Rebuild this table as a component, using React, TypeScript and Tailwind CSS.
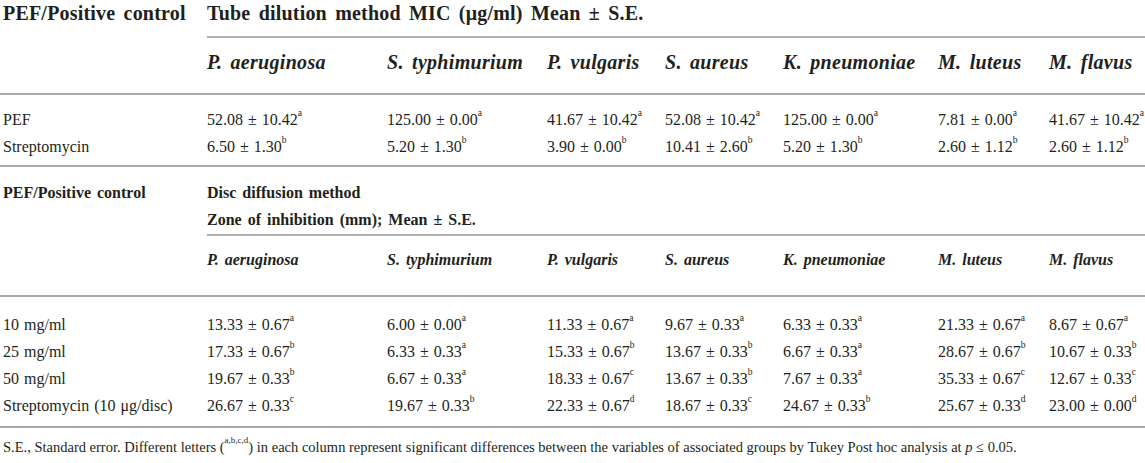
const species = [
  'P. aeruginosa',
  'S. typhimurium',
  'P. vulgaris',
  'S. aureus',
  'K. pneumoniae',
  'M. luteus',
  'M. flavus',
];

type Cell = [string, string];

const micRows: { label: string; values: Cell[] }[] = [
  {
    label: 'PEF',
    values: [
      ['52.08 ± 10.42', 'a'],
      ['125.00 ± 0.00', 'a'],
      ['41.67 ± 10.42', 'a'],
      ['52.08 ± 10.42', 'a'],
      ['125.00 ± 0.00', 'a'],
      ['7.81 ± 0.00', 'a'],
      ['41.67 ± 10.42', 'a'],
    ],
  },
  {
    label: 'Streptomycin',
    values: [
      ['6.50 ± 1.30', 'b'],
      ['5.20 ± 1.30', 'b'],
      ['3.90 ± 0.00', 'b'],
      ['10.41 ± 2.60', 'b'],
      ['5.20 ± 1.30', 'b'],
      ['2.60 ± 1.12', 'b'],
      ['2.60 ± 1.12', 'b'],
    ],
  },
];

const discRows: { label: string; values: Cell[] }[] = [
  {
    label: '10 mg/ml',
    values: [
      ['13.33 ± 0.67', 'a'],
      ['6.00 ± 0.00', 'a'],
      ['11.33 ± 0.67', 'a'],
      ['9.67 ± 0.33', 'a'],
      ['6.33 ± 0.33', 'a'],
      ['21.33 ± 0.67', 'a'],
      ['8.67 ± 0.67', 'a'],
    ],
  },
  {
    label: '25 mg/ml',
    values: [
      ['17.33 ± 0.67', 'b'],
      ['6.33 ± 0.33', 'a'],
      ['15.33 ± 0.67', 'b'],
      ['13.67 ± 0.33', 'b'],
      ['6.67 ± 0.33', 'a'],
      ['28.67 ± 0.67', 'b'],
      ['10.67 ± 0.33', 'b'],
    ],
  },
  {
    label: '50 mg/ml',
    values: [
      ['19.67 ± 0.33', 'b'],
      ['6.67 ± 0.33', 'a'],
      ['18.33 ± 0.67', 'c'],
      ['13.67 ± 0.33', 'b'],
      ['7.67 ± 0.33', 'a'],
      ['35.33 ± 0.67', 'c'],
      ['12.67 ± 0.33', 'c'],
    ],
  },
  {
    label: 'Streptomycin (10 μg/disc)',
    values: [
      ['26.67 ± 0.33', 'c'],
      ['19.67 ± 0.33', 'b'],
      ['22.33 ± 0.67', 'd'],
      ['18.67 ± 0.33', 'c'],
      ['24.67 ± 0.33', 'b'],
      ['25.67 ± 0.33', 'd'],
      ['23.00 ± 0.00', 'd'],
    ],
  },
];

function Value({ cell }: { cell: Cell }) {
  return (
    <span className="whitespace-nowrap">
      {cell[0]}
      <sup className="text-[9.5px] align-[4px] [word-spacing:0]">{cell[1]}</sup>
    </span>
  );
}

function DataRow({ label, values }: { label: string; values: Cell[] }) {
  return (
    <tr className="h-[27px] align-middle text-[16px] [word-spacing:1px]">
      <td className="pl-[3px] whitespace-nowrap">{label}</td>
      {values.map((v, j) => (
        <td key={j}>
          <Value cell={v} />
        </td>
      ))}
    </tr>
  );
}

export default function App() {
  return (
    <div
      className="w-[1145px] h-[463px] bg-white text-[#231f20] overflow-hidden"
      style={{ fontFamily: '"Liberation Serif", "Times New Roman", serif' }}
    >
      <table className="table-fixed border-collapse w-[1145px]">
        <colgroup>
          <col className="w-[207px]" />
          <col className="w-[180px]" />
          <col className="w-[160px]" />
          <col className="w-[118px]" />
          <col className="w-[118px]" />
          <col className="w-[155px]" />
          <col className="w-[111px]" />
          <col className="w-[96px]" />
        </colgroup>
        <tbody>
          {/* MIC section */}
          <tr className="h-[37px] align-top text-[20px] font-bold leading-[22px] tracking-[0.2px] [word-spacing:3px]">
            <td className="pl-[3px] pt-[2px] whitespace-nowrap">PEF/Positive control</td>
            <td colSpan={7} className="pt-[2px] border-b-2 border-[#b0b0b0] whitespace-nowrap">
              Tube dilution method MIC (μg/ml) Mean ± S.E.
            </td>
          </tr>
          <tr className="h-[55px] text-[20px] font-bold italic tracking-[0.3px] [word-spacing:3px]">
            <td />
            {species.map((s) => (
              <td key={s} className="pb-[6px] whitespace-nowrap">
                {s}
              </td>
            ))}
          </tr>
          <tr className="h-[2px] border-b-2 border-[#a8a8a8]">
            <td colSpan={8} />
          </tr>
          <tr className="h-[12px]">
            <td colSpan={8} />
          </tr>
          {micRows.map((row) => (
            <DataRow key={row.label} label={row.label} values={row.values} />
          ))}
          <tr className="h-[6px] border-b-2 border-[#a8a8a8]">
            <td colSpan={8} />
          </tr>

          {/* Disc diffusion section */}
          <tr className="h-[39px] align-bottom text-[16px] font-bold [word-spacing:2px]">
            <td className="pl-[3px] whitespace-nowrap">PEF/Positive control</td>
            <td colSpan={7} className="whitespace-nowrap">
              Disc diffusion method
            </td>
          </tr>
          <tr className="h-[30px] align-middle text-[16px] font-bold [word-spacing:2px]">
            <td />
            <td colSpan={7} className="border-b-2 border-[#b0b0b0] whitespace-nowrap">
              Zone of inhibition (mm); Mean ± S.E.
            </td>
          </tr>
          <tr className="h-[59px] text-[16px] font-bold italic [word-spacing:2px]">
            <td />
            {species.map((s) => (
              <td key={s} className="pb-[10px] whitespace-nowrap">
                {s}
              </td>
            ))}
          </tr>
          <tr className="h-[2px] border-b-2 border-[#a8a8a8]">
            <td colSpan={8} />
          </tr>
          <tr className="h-[15px]">
            <td colSpan={8} />
          </tr>
          {discRows.map((row) => (
            <DataRow key={row.label} label={row.label} values={row.values} />
          ))}
          <tr className="h-[8px] border-b-2 border-[#a8a8a8]">
            <td colSpan={8} />
          </tr>
        </tbody>
      </table>
      <p className="pl-[3px] pt-[10px] text-[14.5px] leading-[18px] whitespace-nowrap">
        S.E., Standard error. Different letters (
        <sup className="text-[9px] align-[5px]">a,b,c,d</sup>) in each column represent significant
        differences between the variables of associated groups by Tukey Post hoc analysis at{' '}
        <i>p</i> ≤ 0.05.
      </p>
    </div>
  );
}
